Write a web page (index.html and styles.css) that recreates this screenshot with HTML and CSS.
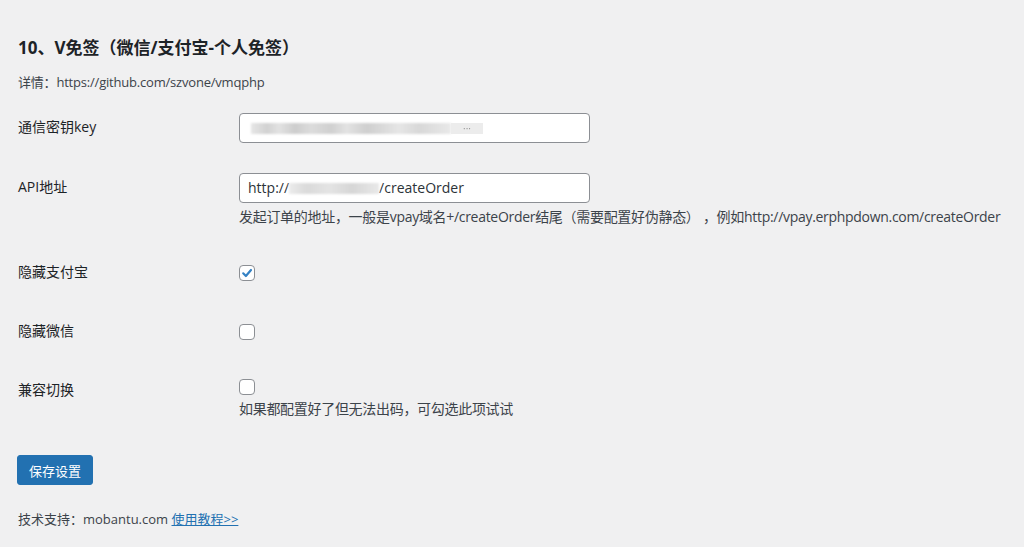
FILE: index.html
```html
<!DOCTYPE html>
<html lang="zh-CN">
<head>
    <meta charset="UTF-8">
    <meta name="viewport" content="width=device-width, initial-scale=1.0">
    <title>V免签设置</title>
    <link rel="stylesheet" href="styles.css">
</head>
<body>
    <div class="wrap">
        <h2 class="title">10、V免签（微信/支付宝-个人免签）</h2>
        <p class="intro">详情：https://github.com/szvone/vmqphp</p>

        <!-- Settings rows -->
        <div class="form-table">
            <div class="form-row">
                <div class="form-label">通信密钥key</div>
                <div class="form-field">
                    <div class="text-input">
                        <span class="masked masked-key"></span><span class="masked-dots">···</span>
                    </div>
                </div>
            </div>
            <div class="form-row">
                <div class="form-label">API地址</div>
                <div class="form-field">
                    <div class="text-input">
                        <span>http://</span><span class="masked masked-host"></span><span>/createOrder</span>
                    </div>
                    <p class="description">发起订单的地址，一般是vpay域名+/createOrder结尾（需要配置好伪静态） ，例如http://vpay.erphpdown.com/createOrder</p>
                </div>
            </div>
            <div class="form-row">
                <div class="form-label">隐藏支付宝</div>
                <div class="form-field">
                    <div class="check-row">
                        <span class="checkbox checked">
                            <svg viewBox="0 0 16 16" width="16" height="16"><path d="M4.2 8.3 L6.9 11 L12 5" fill="none" stroke="#3582c4" stroke-width="2.2" stroke-linecap="round" stroke-linejoin="round"/></svg>
                        </span>
                    </div>
                </div>
            </div>
            <div class="form-row">
                <div class="form-label">隐藏微信</div>
                <div class="form-field">
                    <div class="check-row">
                        <span class="checkbox"></span>
                    </div>
                </div>
            </div>
            <div class="form-row">
                <div class="form-label">兼容切换</div>
                <div class="form-field">
                    <div class="check-row tight">
                        <span class="checkbox"></span>
                    </div>
                    <p class="description">如果都配置好了但无法出码，可勾选此项试试</p>
                </div>
            </div>
        </div>

        <p class="submit"><button class="button-primary">保存设置</button></p>

        <p class="support">技术支持：mobantu.com <a href="#">使用教程&gt;&gt;</a></p>
    </div>
</body>
</html>
```

FILE: styles.css
```css
* {
    margin: 0;
    padding: 0;
    box-sizing: border-box;
}

body {
    background-color: #f0f0f1;
    color: #3c434a;
    font-family: "Open Sans", "Noto Sans CJK SC", sans-serif;
    font-size: 14px;
}

.wrap {
    padding: 36px 0 0 18px;
}

.title {
    font-size: 17px;
    line-height: 23px;
    font-weight: 700;
    color: #1d2327;
}

.intro {
    margin-top: 13px;
    font-size: 13px;
    line-height: 20px;
    letter-spacing: -0.2px;
}

/* Settings rows */
.form-table {
    margin-top: 6px;
}

.form-row {
    display: grid;
    grid-template-columns: 211px 1fr;
}

.form-label {
    padding: 20px 10px 20px 0;
    line-height: 18px;
    color: #1d2327;
}

.form-field {
    padding: 15px 10px;
    line-height: 20px;
}

.text-input {
    display: flex;
    align-items: center;
    width: 351px;
    height: 30px;
    padding: 0 8px;
    background-color: #fff;
    border: 1px solid #8c8f94;
    border-radius: 4px;
    color: #2c3338;
}

.masked {
    display: inline-block;
    height: 11px;
    filter: blur(1px);
}

.masked-key {
    width: 200px;
    margin-left: 3px;
    background: linear-gradient(90deg, #e6e6e6 0, #d2d2d2 8%, #e2e2e2 14%, #cdcdcd 22%, #dcdcdc 30%, #d0d0d0 40%, #e3e3e3 48%, #cfcfcf 58%, #dadada 66%, #e6e6e6 74%, #d8d8d8 84%, #e9e9e9 100%);
}

.masked-dots {
    display: inline-block;
    width: 32px;
    height: 11px;
    line-height: 11px;
    font-size: 10px;
    color: #9a9a9a;
    text-align: center;
    background-color: #ececec;
    filter: blur(0.4px);
}

.masked-host {
    width: 90px;
    background: linear-gradient(90deg, #ececec 0, #dadada 20%, #e4e4e4 45%, #d6d6d6 70%, #e9e9e9 100%);
}

.description {
    margin-top: 3px;
    line-height: 22px;
    white-space: nowrap;
    letter-spacing: -0.3px;
}

.check-row {
    height: 29px;
    padding-top: 7px;
}

.check-row.tight {
    height: 19px;
    padding-top: 3px;
}

.checkbox {
    display: block;
    width: 16px;
    height: 16px;
    background-color: #fff;
    border: 1px solid #8c8f94;
    border-radius: 4px;
    overflow: hidden;
}

.checkbox svg {
    display: block;
    margin: -1px 0 0 -1px;
}

/* Submit button */
.submit {
    margin-top: 20px;
}

.button-primary {
    display: block;
    margin-left: -1px;
    height: 30px;
    padding: 0 11px;
    background-color: #2271b1;
    border: 1px solid #2271b1;
    border-radius: 3px;
    color: #fff;
    font-family: inherit;
    font-size: 13px;
}

.support {
    margin-top: 24px;
    font-size: 13px;
    line-height: 20px;
}

.support a {
    color: #2271b1;
}
```
